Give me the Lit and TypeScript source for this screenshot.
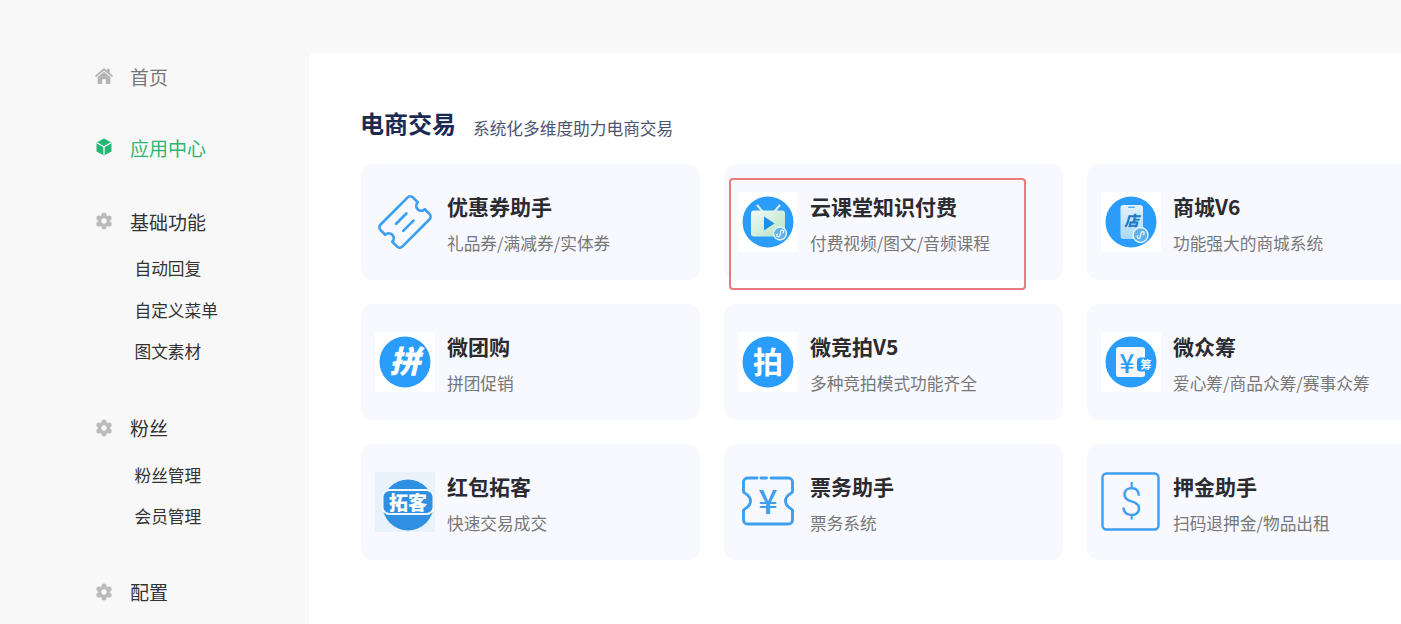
import { LitElement, html, svg, css } from 'lit';
import { customElement } from 'lit/decorators.js';

const BLUE = '#2a9dfc';
const LINE = '#3c9ff0';
const CJK = "'Noto Sans CJK SC', sans-serif";

// six lobes round a hub, with a small hole in the page colour
const lobes = [0, 60, 120, 180, 240, 300].map((a) => {
  const r = (a * Math.PI) / 180;
  return svg`<circle cx=${9 + 6.2 * Math.sin(r)} cy=${9 - 6.2 * Math.cos(r)} r="2.700" fill="#bbb"></circle>`;
});
const gear = html`<svg class="nav-icon" viewBox="-0.500 -0.500 19 19">
  ${lobes}
  <circle cx="9" cy="9" r="6.400" fill="#bbb"></circle>
  <circle cx="9" cy="9" r="2.800" fill="#f8f8f8"></circle>
</svg>`;
const home = html`<svg class="nav-icon" viewBox="0 0 20 18"><path fill="#b4b4b4" d="M10 0l3.500 3V1h2.800v4.500L20 8.800l-1.200 1.500L10 2.900 1.200 10.300 0 8.800zM10 4.300l7 5.900V17a1 1 0 0 1-1 1h-4v-5.500H8V18H4a1 1 0 0 1-1-1v-6.800z"></path></svg>`;
const cube = html`<svg class="nav-icon" viewBox="0 0 18 18"><path fill="#22b573" d="M9 0.500l7.500 4v9L9 17.500l-7.500-4v-9z"></path><path fill="none" stroke="#fff" stroke-width="1.300" d="M1.800 4.700L9 8.800l7.200-4.100M9 8.800v8.500"></path></svg>`;

const circle = (fill = BLUE) => svg`<circle cx="30" cy="30" r="25.500" fill=${fill}></circle>`;
const whiteBg = svg`<rect width="60" height="60" fill="#fff"></rect>`;

// small mini-program mark that sits on the lower right of some icons
const badge = (cx: number, cy: number, r: number) => svg`
  <circle cx=${cx} cy=${cy} r=${r} fill="#62b4ea" stroke="#e6f4fb" stroke-width="1.400"></circle>
  <path fill="none" stroke="#fff" stroke-width="1.100" stroke-linecap="round"
    d="M${cx - 2.5} ${cy + 0.5}a1.500 1.500 0 1 0 2.200 1.500l1-4a1.500 1.500 0 1 1 2 1.500"></path>`;

const icons: Record<string, unknown> = {
  coupon: svg`
    <g transform="rotate(-45 30 30)" fill="none" stroke=${LINE} stroke-width="2.700" stroke-linecap="round" stroke-linejoin="round">
      <path d="M11 14.500h38a4 4 0 0 1 4 4v6.500a5 5 0 0 0 0 10v6.500a4 4 0 0 1-4 4H11a4 4 0 0 1-4-4V35a5 5 0 0 0 0-10v-6.500a4 4 0 0 1 4-4z"></path>
      <path d="M22.500 25h14.500M22.500 35h14.500"></path>
    </g>`,
  tv: svg`
    ${whiteBg}${circle()}
    <defs><linearGradient id="tvg" x1="0" y1="0" x2="1" y2="1"><stop offset="0" stop-color="#f2faf8"></stop><stop offset="1" stop-color="#b5e2bf"></stop></linearGradient></defs>
    <path d="M19.500 13.500l5 6M41.500 13.500l-5 6" stroke="#e3f3ee" stroke-width="2" stroke-linecap="round"></path>
    <rect x="13" y="18.500" width="34" height="26" rx="3" fill="url(#tvg)"></rect>
    <path d="M26 24.500l10.500 7L26 38.500z" fill="#1e8fe8"></path>
    ${badge(42, 41.500, 6.500)}`,
  phone: svg`
    ${whiteBg}${circle()}
    <defs><linearGradient id="phg" x1="0" y1="0" x2="0" y2="1"><stop offset="0" stop-color="#e2f2fd"></stop><stop offset="1" stop-color="#a9d8f8"></stop></linearGradient></defs>
    <rect x="19.500" y="13" width="22.500" height="34" rx="3" fill="url(#phg)"></rect>
    <rect x="27" y="14.500" width="7" height="1.500" rx=".7" fill="#5aaee8"></rect>
    <text x="30.500" y="34" text-anchor="middle" font-size="14.500" font-weight="900" font-style="italic" fill="#1b78c6" font-family=${CJK}>店</text>
    ${badge(39.500, 43, 7.500)}`,
  pin: svg`
    ${whiteBg}${circle()}
    <text transform="translate(30 41) skewX(-13)" text-anchor="middle" font-size="31" font-weight="900" fill="#fff" font-family=${CJK}>拼</text>`,
  pai: svg`
    ${whiteBg}${circle()}
    <text x="30" y="41" text-anchor="middle" font-size="30" font-weight="700" fill="#fff" font-family=${CJK}>拍</text>`,
  fund: svg`
    ${whiteBg}${circle()}
    <rect x="15" y="15" width="29" height="30" rx="2.500" fill="#f4f6f8"></rect>
    <text x="26" y="40.500" text-anchor="middle" font-size="26" font-weight="500" fill=${BLUE} font-family=${CJK}>¥</text>
    <rect x="36" y="25.500" width="18" height="14" rx="3.500" fill=${BLUE}></rect>
    <text x="45" y="37" text-anchor="middle" font-size="11" font-weight="700" fill="#fff" font-family=${CJK}>筹</text>`,
  tuoke: svg`
    <rect width="60" height="60" fill="#e9f2fb"></rect>
    <circle cx="33" cy="33" r="25.500" fill="#2f90e2"></circle>
    <rect x="7.500" y="18" width="51" height="24" rx="7" fill="#2f90e2" stroke="#f0f7fd" stroke-width="2"></rect>
    <text x="33" y="37.500" text-anchor="middle" font-size="19" font-weight="900" fill="#fff" font-family=${CJK}>拓客</text>`,
  ticket: svg`
    <g fill="none" stroke=${LINE} stroke-width="2.900" stroke-linecap="round" stroke-linejoin="round">
      <path d="M19 6H9.500a4 4 0 0 0-4 4v9.500c0 2.200 7 2.800 7 9.500s-7 7.300-7 9.500V48a4 4 0 0 0 4 4h41a4 4 0 0 0 4-4V38.500c0-2.200-7-2.800-7-9.500s7-7.300 7-9.500V10a4 4 0 0 0-4-4H33"></path>
      <path d="M23 6h5.500"></path>
    </g>
    <text x="30" y="42" text-anchor="middle" font-size="34" font-weight="500" fill=${LINE} font-family=${CJK}>¥</text>`,
  dollar: svg`
    <rect x="1.500" y="1.500" width="56" height="56" rx="4" fill="none" stroke=${LINE} stroke-width="2.400"></rect>
    <text x="30" y="44" text-anchor="middle" font-size="40" font-weight="300" fill=${LINE} font-family="Roboto, sans-serif">$</text>`,
};

const cards = [
  { icon: 'coupon', title: '优惠券助手', sub: '礼品券/满减券/实体券' },
  { icon: 'tv', title: '云课堂知识付费', sub: '付费视频/图文/音频课程', marked: true },
  { icon: 'phone', title: '商城V6', sub: '功能强大的商城系统' },
  { icon: 'pin', title: '微团购', sub: '拼团促销' },
  { icon: 'pai', title: '微竞拍V5', sub: '多种竞拍模式功能齐全' },
  { icon: 'fund', title: '微众筹', sub: '爱心筹/商品众筹/赛事众筹' },
  { icon: 'tuoke', title: '红包拓客', sub: '快速交易成交' },
  { icon: 'ticket', title: '票务助手', sub: '票务系统' },
  { icon: 'dollar', title: '押金助手', sub: '扫码退押金/物品出租' },
];

@customElement('app-root')
export class AppRoot extends LitElement {
  static styles = css`
    :host {
      display: block;
      height: 100vh;
      overflow: hidden;
      background: #f8f8f8;
      font-family: 'Noto Sans CJK SC', 'Noto Sans', sans-serif;
    }

    .layout {
      display: flex;
      height: 100%;
      padding-top: 53px;
      box-sizing: border-box;
    }

    .sidebar {
      flex: 0 0 309px;
      padding-top: 3px;
      box-sizing: border-box;
    }

    .nav-head {
      display: flex;
      align-items: center;
      height: 40px;
      padding-left: 95px;
      font-size: 19px;
      color: #333;
    }
    .nav-head.muted { color: #777; }
    .nav-head.active { color: #2bb673; }

    .nav-icon {
      width: 18px;
      height: 18px;
      margin-right: 17px;
      flex: none;
    }

    .group-1 { margin-top: 31px; }
    .group-2 { margin-top: 34px; }
    .group-3 { margin-top: 35px; }
    .group-4 { margin-top: 34px; }

    .nav-sub {
      display: flex;
      flex-direction: column;
      margin-top: 7px;
    }

    .nav-sub span {
      height: 41.500px;
      line-height: 41.500px;
      padding-left: 134.500px;
      font-size: 16.700px;
      color: #333;
    }

    .main {
      flex: 1;
      min-width: 0;
      background: #fff;
      padding: 54px 0 0 52px;
      overflow: hidden;
    }

    .heading {
      display: flex;
      align-items: flex-start;
      height: 41px;
      margin-bottom: 16px;
    }

    .heading h2 {
      margin: 0 17px 0 -1px;
      font-size: 24px;
      line-height: 32px;
      font-weight: 700;
      color: #1b2a55;
    }

    .heading span {
      margin-top: 9px;
      font-size: 16.700px;
      line-height: 24px;
      color: #4c5470;
    }

    .grid {
      display: grid;
      grid-template-columns: repeat(3, 339.200px);
      grid-auto-rows: 116px;
      gap: 24px 23.800px;
    }

    .card {
      position: relative;
      display: flex;
      align-items: center;
      gap: 12px;
      padding-left: 14px;
      background: #f8f9fe;
      border-radius: 12px;
    }

    .card svg {
      width: 60px;
      height: 60px;
      flex: none;
    }

    .text {
      padding-top: 2px;
    }

    .title {
      font-size: 21px;
      font-weight: 700;
      line-height: 30px;
      color: #2b2b30;
    }

    .sub {
      margin-top: 10px;
      font-size: 16.700px;
      line-height: 24px;
      color: #777;
    }

    .mark {
      position: absolute;
      left: 5px;
      top: 14px;
      width: 297px;
      height: 112px;
      box-sizing: border-box;
      border: 2px solid #ea7b80;
      border-radius: 4px;
    }
  `;

  render() {
    return html`
      <div class="layout">
        <nav class="sidebar">
          <div class="nav-head muted">${home}首页</div>
          <div class="nav-head active group-1">${cube}应用中心</div>
          <div class="nav-head group-2">${gear}基础功能</div>
          <div class="nav-sub">
            <span>自动回复</span>
            <span>自定义菜单</span>
            <span>图文素材</span>
          </div>
          <div class="nav-head group-3">${gear}粉丝</div>
          <div class="nav-sub">
            <span>粉丝管理</span>
            <span>会员管理</span>
          </div>
          <div class="nav-head group-4">${gear}配置</div>
        </nav>
        <main class="main">
          <div class="heading">
            <h2>电商交易</h2>
            <span>系统化多维度助力电商交易</span>
          </div>
          <div class="grid">
            ${cards.map(
              (c) => html`
                <div class="card">
                  <svg viewBox="0 0 60 60">${icons[c.icon]}</svg>
                  <div class="text">
                    <div class="title">${c.title}</div>
                    <div class="sub">${c.sub}</div>
                  </div>
                  ${c.marked ? html`<div class="mark"></div>` : ''}
                </div>
              `
            )}
          </div>
        </main>
      </div>
    `;
  }
}

declare global {
  interface HTMLElementTagNameMap {
    'app-root': AppRoot;
  }
}
